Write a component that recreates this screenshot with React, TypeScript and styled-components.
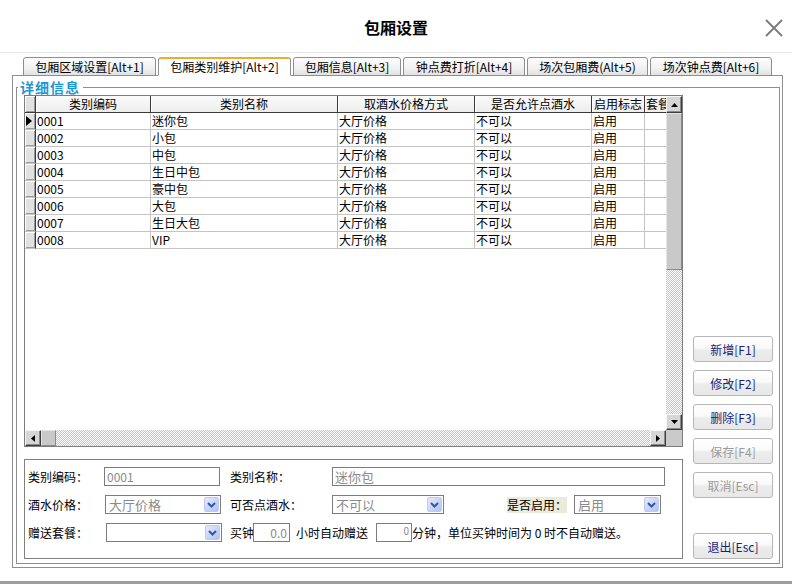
import React from "react";
import styled, { createGlobalStyle } from "styled-components";

const GlobalStyle = createGlobalStyle`
  html, body {
    margin: 0;
    padding: 0;
    background: #ffffff;
  }
  body {
    font-family: "Noto Sans CJK SC", "Noto Sans", sans-serif;
    font-size: 12px;
    color: #000000;
  }
  * {
    box-sizing: border-box;
  }
`;

const tabs = [
  { label: "包厢区域设置[Alt+1]", width: 133 },
  { label: "包厢类别维护[Alt+2]", width: 133, active: true },
  { label: "包厢信息[Alt+3]", width: 108 },
  { label: "钟点费打折[Alt+4]", width: 122 },
  { label: "场次包厢费(Alt+5)", width: 121 },
  { label: "场次钟点费[Alt+6]", width: 122 },
];

const columns = [
  { title: "类别编码", width: 115 },
  { title: "类别名称", width: 187 },
  { title: "取酒水价格方式", width: 137 },
  { title: "是否允许点酒水", width: 117 },
  { title: "启用标志", width: 53 },
  { title: "套餐", width: 60, align: "left" },
];

const rows = [
  ["0001", "迷你包"],
  ["0002", "小包"],
  ["0003", "中包"],
  ["0004", "生日中包"],
  ["0005", "豪中包"],
  ["0006", "大包"],
  ["0007", "生日大包"],
  ["0008", "VIP"],
];

const actions = [
  { label: "新增[F1]" },
  { label: "修改[F2]" },
  { label: "删除[F3]" },
  { label: "保存[F4]", disabled: true },
  { label: "取消[Esc]", disabled: true },
  { label: "退出[Esc]", apart: true },
];

const COLS = `11px ${columns.map((c) => c.width + "px").join(" ")}`;

const Window = styled.div`
  width: 792px;
  height: 584px;
  display: flex;
  flex-direction: column;
  background: #ffffff;
  overflow: hidden;
`;

const TitleBar = styled.div`
  height: 53px;
  flex: none;
  display: grid;
  grid-template-columns: 1fr auto 1fr;
  align-items: center;
  border-bottom: 1px solid #e6e6e6;
`;

const Title = styled.h1`
  grid-column: 2;
  margin: 0;
  padding-top: 2px;
  font-size: 16px;
  font-weight: bold;
  line-height: 20px;
`;

const CloseButton = styled.button`
  grid-column: 3;
  justify-self: end;
  margin-right: 8px;
  margin-top: 4px;
  width: 20px;
  height: 20px;
  padding: 0;
  border: none;
  background: none;
  display: flex;
  align-items: center;
  justify-content: center;
`;

const TabStrip = styled.div`
  display: flex;
  align-items: flex-end;
  gap: 2px;
  padding: 4px 0 0 23px;
  margin-bottom: -1px;
  position: relative;
  z-index: 1;
`;

const Tab = styled.div<{ $width: number; $active?: boolean }>`
  width: ${(p) => p.$width}px;
  height: 19px;
  display: flex;
  align-items: center;
  justify-content: center;
  white-space: nowrap;
  line-height: 16px;
  border: 1px solid #8e8e8e;
  border-top: ${(p) => (p.$active ? "2px solid #f3ac26" : "1px solid #8e8e8e")};
  border-bottom: ${(p) => (p.$active ? "1px solid #ffffff" : "1px solid #8e8e8e")};
  border-radius: 3px 3px 0 0;
  background: ${(p) =>
    p.$active ? "#ffffff" : "linear-gradient(#fdfdfd, #f1f1f1 60%, #e2e2e2)"};
`;

const Panel = styled.div`
  height: 493px;
  margin: 0 9px 0 12px;
  padding: 4px 2px 3px 3px;
  border: 1px solid #8e8e8e;
  display: flex;
  flex-direction: column;
  background: #ffffff;
`;

const GroupBox = styled.fieldset`
  margin: 0;
  padding: 0 6px 4px 7px;
  border: 1px solid #8e8e8e;
  min-width: 0;
  flex: 1;
`;

const GroupTitle = styled.legend`
  margin-left: -6px;
  padding: 0 3px 0 2px;
  color: #1f97d4;
  font-size: 14px;
  font-weight: bold;
  line-height: 15px;
  letter-spacing: 1px;
`;

const GroupContent = styled.div`
  display: flex;
  gap: 10px;
  height: 464px;
`;

const MainColumn = styled.div`
  width: 659px;
  display: flex;
  flex-direction: column;
`;

const ActionColumn = styled.div`
  width: 80px;
  display: flex;
  flex-direction: column;
  justify-content: flex-end;
  gap: 8px;
`;

const ActionButton = styled.button<{ $apart?: boolean }>`
  width: 80px;
  height: 26px;
  margin-top: ${(p) => (p.$apart ? "27px" : "0")};
  padding: 0;
  border: 1px solid #b6b6b6;
  border-radius: 3px;
  background: linear-gradient(#ffffff 0%, #fafafa 45%, #ececec 55%, #e8e8e8 100%);
  font: inherit;
  font-size: 12px;
  color: #1a1f7a;
  &:disabled {
    color: #9c9c9c;
  }
`;

const GridFrame = styled.div`
  height: 352px;
  border: 1px solid #7d7d7d;
  display: grid;
  grid-template-columns: 1fr 16px;
  grid-template-rows: 1fr 16px;
`;

const GridViewport = styled.div`
  overflow: hidden;
  background: #ffffff;
`;

const GridRow = styled.div`
  display: grid;
  grid-template-columns: ${COLS};
  width: max-content;
`;

const HeaderCell = styled.div<{ $align?: string }>`
  height: 17px;
  line-height: 16px;
  padding: 0 1px;
  text-align: ${(p) => p.$align || "center"};
  white-space: nowrap;
  overflow: hidden;
  background: linear-gradient(#fbfbfb, #ededed);
  border-right: 1px solid #3a3a3a;
  border-bottom: 1px solid #3a3a3a;
  box-shadow: inset 1px 0 0 #ffffff;
`;

const RowHead = styled.div<{ $header?: boolean }>`
  height: 17px;
  display: flex;
  align-items: center;
  padding-left: 1px;
  background: #e1e1e1;
  border-right: 1px solid #3a3a3a;
  border-bottom: 1px solid ${(p) => (p.$header ? "#3a3a3a" : "#c4c4c4")};
  box-shadow: inset 1px 1px 0 #ffffff, inset -1px -1px 0 #9c9c9c;
`;

const Cell = styled.div`
  height: 17px;
  line-height: 16px;
  padding-left: 1px;
  white-space: nowrap;
  overflow: hidden;
  border-right: 1px solid #c4c4c4;
  border-bottom: 1px solid #c4c4c4;
`;

const ScrollBar = styled.div<{ $vertical?: boolean }>`
  display: flex;
  flex-direction: ${(p) => (p.$vertical ? "column" : "row")};
`;

const ScrollArrow = styled.div`
  flex: none;
  width: 16px;
  height: 16px;
  display: flex;
  align-items: center;
  justify-content: center;
  background: #d6d6d6;
  border: 1px solid;
  border-color: #f6f6f6 #3e3e3e #3e3e3e #f6f6f6;
  box-shadow: inset -1px -1px 0 #8a8a8a;
`;

const ScrollThumb = styled.div<{ $size: number; $vertical?: boolean }>`
  flex: none;
  ${(p) => (p.$vertical ? `height: ${p.$size}px;` : `width: ${p.$size}px;`)}
  background: #c9c9c9;
  border: 1px solid;
  border-color: #e4e4e4 #8a8a8a #8a8a8a #e4e4e4;
`;

const ScrollTrack = styled.div`
  flex: 1;
  background: repeating-conic-gradient(#c4c4c4 0 25%, #ffffff 0 50%) 0 0 / 2px 2px;
`;

const ScrollCorner = styled.div`
  background: #cacaca;
`;

const FormBox = styled.div`
  margin-top: 12px;
  height: 100px;
  border: 1px solid #808080;
  padding: 7px 0 0 3px;
  display: flex;
  flex-direction: column;
  gap: 9px;
`;

const FormRow = styled.div`
  display: flex;
  align-items: center;
  height: 19px;
`;

const Label = styled.span<{ $width?: number; $gap?: number; $shade?: boolean }>`
  flex: none;
  ${(p) => (p.$width ? `width: ${p.$width}px;` : "")}
  margin-left: ${(p) => p.$gap || 0}px;
  line-height: 16px;
  white-space: nowrap;
  background: ${(p) => (p.$shade ? "#ebebdd" : "transparent")};
`;

const TextBox = styled.input<{ $width: number; $gap?: number; $align?: string; $small?: boolean }>`
  flex: none;
  width: ${(p) => p.$width}px;
  height: 19px;
  margin: 0 0 0 ${(p) => p.$gap || 0}px;
  padding: ${(p) => (p.$small ? "0 2px 4px" : "0 2px")};
  border: 1px solid #7c7c7c;
  background: #ffffff;
  font: inherit;
  font-size: ${(p) => (p.$small ? "10px" : "12px")};
  color: #8a8a8a;
  text-align: ${(p) => p.$align || "left"};
  outline: none;
`;

const Select = styled.div<{ $width: number; $gap?: number }>`
  flex: none;
  width: ${(p) => p.$width}px;
  height: 19px;
  margin-left: ${(p) => p.$gap || 0}px;
  border: 1px solid #7c7c7c;
  display: flex;
  align-items: center;
  justify-content: space-between;
  padding: 0 1px 0 3px;
  color: #8a8a8a;
  font-size: 13px;
  line-height: 16px;
`;

const DropButton = styled.span`
  width: 15px;
  height: 15px;
  border-radius: 2px;
  border: 1px solid #c0c9ef;
  background: linear-gradient(135deg, #e6e9ff, #b3c0f3);
  display: flex;
  align-items: center;
  justify-content: center;
`;

const FooterBar = styled.div`
  margin-top: auto;
  height: 3px;
  flex: none;
  background: #9d9d9d;
`;

const Triangle = ({ dir }: { dir: "up" | "down" | "left" | "right" }) => {
  const pts = {
    up: "0,4 7,4 3.5,0",
    down: "0,0 7,0 3.5,4",
    left: "4,0 4,7 0,3.5",
    right: "0,0 0,7 4,3.5",
  }[dir];
  const horiz = dir === "left" || dir === "right";
  return (
    <svg width={horiz ? 4 : 7} height={horiz ? 7 : 4} viewBox={horiz ? "0 0 4 7" : "0 0 7 4"}>
      <polygon points={pts} fill="#000" />
    </svg>
  );
};

const Dropdown = ({ value, width, gap }: { value?: string; width: number; gap?: number }) => (
  <Select $width={width} $gap={gap}>
    <span>{value}</span>
    <DropButton>
      <svg width="9" height="6" viewBox="0 0 9 6">
        <path d="M1 1 L4.5 4.5 L8 1" fill="none" stroke="#2d5b9e" strokeWidth="2" />
      </svg>
    </DropButton>
  </Select>
);

const App = () => {
  return (
    <>
      <GlobalStyle />
      <Window>
        <TitleBar>
          <Title>包厢设置</Title>
          <CloseButton aria-label="关闭">
            <svg width="18" height="18" viewBox="0 0 18 18">
              <path d="M1 1 L17 17 M17 1 L1 17" stroke="#7a7a7a" strokeWidth="1.8" />
            </svg>
          </CloseButton>
        </TitleBar>

        <TabStrip>
          {tabs.map((t) => (
            <Tab key={t.label} $width={t.width} $active={t.active}>
              {t.label}
            </Tab>
          ))}
        </TabStrip>

        <Panel>
          <GroupBox>
            <GroupTitle>详细信息</GroupTitle>
            <GroupContent>
              <MainColumn>
                <GridFrame>
                  <GridViewport>
                    <GridRow>
                      <RowHead $header />
                      {columns.map((c) => (
                        <HeaderCell key={c.title} $align={c.align}>
                          {c.title}
                        </HeaderCell>
                      ))}
                    </GridRow>
                    {rows.map(([code, name], i) => (
                      <GridRow key={code}>
                        <RowHead>
                          {i === 0 && (
                            <svg width="6" height="10" viewBox="0 0 6 10">
                              <polygon points="0,0 6,5 0,10" fill="#000" />
                            </svg>
                          )}
                        </RowHead>
                        <Cell>{code}</Cell>
                        <Cell>{name}</Cell>
                        <Cell>大厅价格</Cell>
                        <Cell>不可以</Cell>
                        <Cell>启用</Cell>
                        <Cell />
                      </GridRow>
                    ))}
                  </GridViewport>
                  <ScrollBar $vertical>
                    <ScrollArrow style={{ height: 17 }}>
                      <Triangle dir="up" />
                    </ScrollArrow>
                    <ScrollThumb $vertical $size={157} />
                    <ScrollTrack />
                    <ScrollArrow>
                      <Triangle dir="down" />
                    </ScrollArrow>
                  </ScrollBar>
                  <ScrollBar>
                    <ScrollArrow>
                      <Triangle dir="left" />
                    </ScrollArrow>
                    <ScrollThumb $size={15} />
                    <ScrollTrack />
                    <ScrollArrow>
                      <Triangle dir="right" />
                    </ScrollArrow>
                  </ScrollBar>
                  <ScrollCorner />
                </GridFrame>

                <FormBox>
                  <FormRow>
                    <Label $width={76}>类别编码：</Label>
                    <TextBox $width={116} readOnly value="0001" />
                    <Label $width={102} $gap={10}>类别名称：</Label>
                    <TextBox $width={333} readOnly value="迷你包" style={{ fontSize: 13 }} />
                  </FormRow>
                  <FormRow>
                    <Label $width={77}>酒水价格：</Label>
                    <Dropdown value="大厅价格" width={116} />
                    <Label $width={102} $gap={9}>可否点酒水：</Label>
                    <Dropdown value="不可以" width={112} />
                    <Label $gap={63} $shade>是否启用：</Label>
                    <Dropdown value="启用" width={87} gap={7} />
                  </FormRow>
                  <FormRow>
                    <Label $width={78}>赠送套餐：</Label>
                    <Dropdown width={116} />
                    <Label $width={23} $gap={8}>买钟</Label>
                    <TextBox $width={37} $align="right" readOnly value="0.0" />
                    <Label $gap={6}>小时自动赠送</Label>
                    <TextBox $width={36} $gap={8} $align="right" $small readOnly value="0" />
                    <Label>分钟，单位买钟时间为 0 时不自动赠送。</Label>
                  </FormRow>
                </FormBox>
              </MainColumn>

              <ActionColumn>
                {actions.map((a) => (
                  <ActionButton key={a.label} disabled={a.disabled} $apart={a.apart}>
                    {a.label}
                  </ActionButton>
                ))}
              </ActionColumn>
            </GroupContent>
          </GroupBox>
        </Panel>

        <FooterBar />
      </Window>
    </>
  );
};

export default App;
